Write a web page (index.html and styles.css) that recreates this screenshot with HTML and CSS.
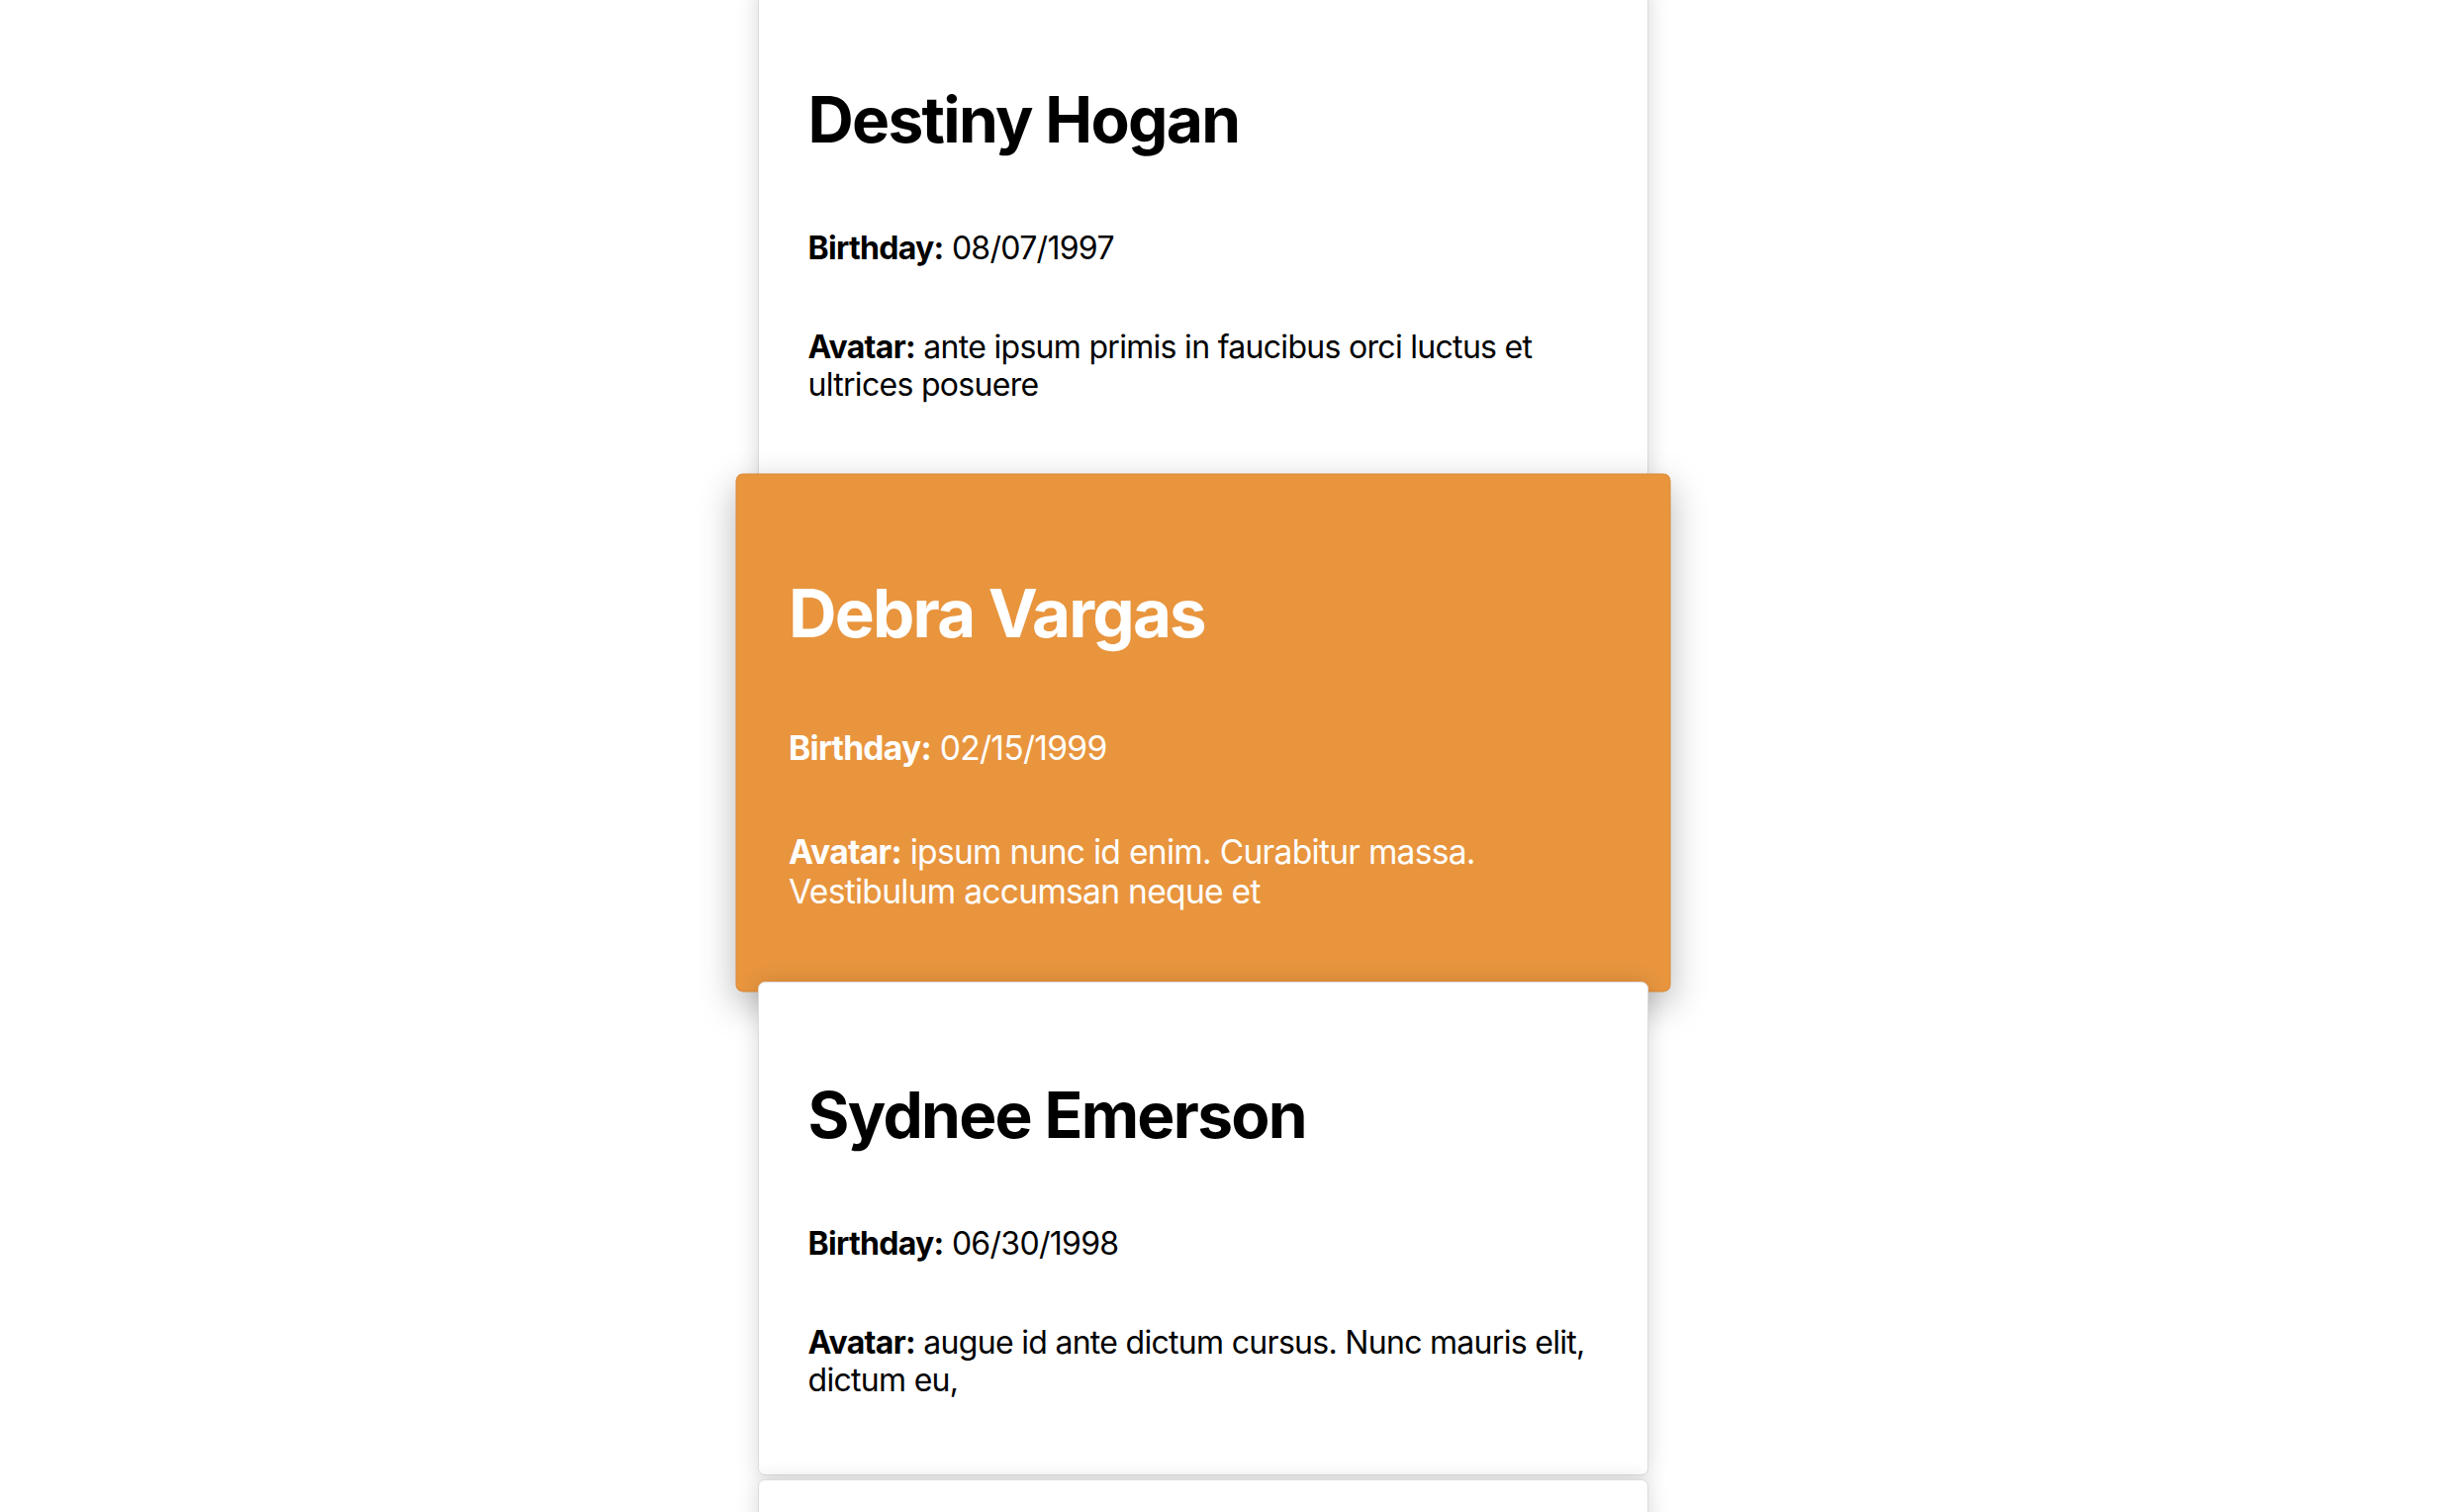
FILE: index.html
```html
<!DOCTYPE html>
<html lang="en">
<head>
    <meta charset="UTF-8">
    <meta name="viewport" content="width=device-width, initial-scale=1.0">
    <title>Contacts</title>
    <link rel="stylesheet" href="styles.css">
</head>
<body>
    <main class="card-list">
        <div class="card">
            <h1>Destiny Hogan</h1>
            <p><strong>Birthday:</strong> 08/07/1997</p>
            <p><strong>Avatar:</strong> ante ipsum primis in faucibus orci luctus et ultrices posuere</p>
        </div>
        <div class="card active">
            <h1>Debra Vargas</h1>
            <p><strong>Birthday:</strong> 02/15/1999</p>
            <p><strong>Avatar:</strong> ipsum nunc id enim. Curabitur massa. Vestibulum accumsan neque et</p>
        </div>
        <div class="card">
            <h1>Sydnee Emerson</h1>
            <p><strong>Birthday:</strong> 06/30/1998</p>
            <p><strong>Avatar:</strong> augue id ante dictum cursus. Nunc mauris elit, dictum eu,</p>
        </div>
        <div class="card">
            <h1>Wynne Bowers</h1>
            <p><strong>Birthday:</strong> 11/23/1996</p>
            <p><strong>Avatar:</strong> lorem ipsum dolor sit amet, consectetuer adipiscing elit</p>
        </div>
    </main>
</body>
</html>
```

FILE: styles.css
```css
:root {
    --background: #ffffff;
    --text: #000000;
    --accent: #e8953e;
    --border: #dcdcdc;
}

body {
    margin: 0;
    padding: 0 37px 0 0;
    background: var(--background);
    color: var(--text);
    font-family: Inter, "Noto Sans", sans-serif;
    overflow: hidden;
    height: 1528px;
}

.card-list {
    width: 900px;
    margin: -14px auto 0;
}

.card {
    position: relative;
    display: flex;
    flex-direction: column;
    box-sizing: border-box;
    padding: 50px 50px 45px;
    margin-bottom: 4px;
    background: var(--background);
    border: 1px solid var(--border);
    border-radius: 7px;
    box-shadow: 0 2px 22px rgba(0, 0, 0, 0.16);
    transform: scale(1);
}

.card h1 {
    margin: 46px 0 42px;
    font-size: 64px;
    line-height: 76px;
    font-weight: 700;
    letter-spacing: -1.7px;
}

.card p {
    margin: 31px 0;
    font-size: 32px;
    line-height: 38px;
    letter-spacing: -0.7px;
}

.card p strong {
    font-weight: 700;
}

.card.active {
    background: var(--accent);
    border-color: #d98a38;
    color: #ffffff;
    transform: translateY(2px) scale(1.05);
    box-shadow: 0 12px 34px rgba(0, 0, 0, 0.28);
}
```
